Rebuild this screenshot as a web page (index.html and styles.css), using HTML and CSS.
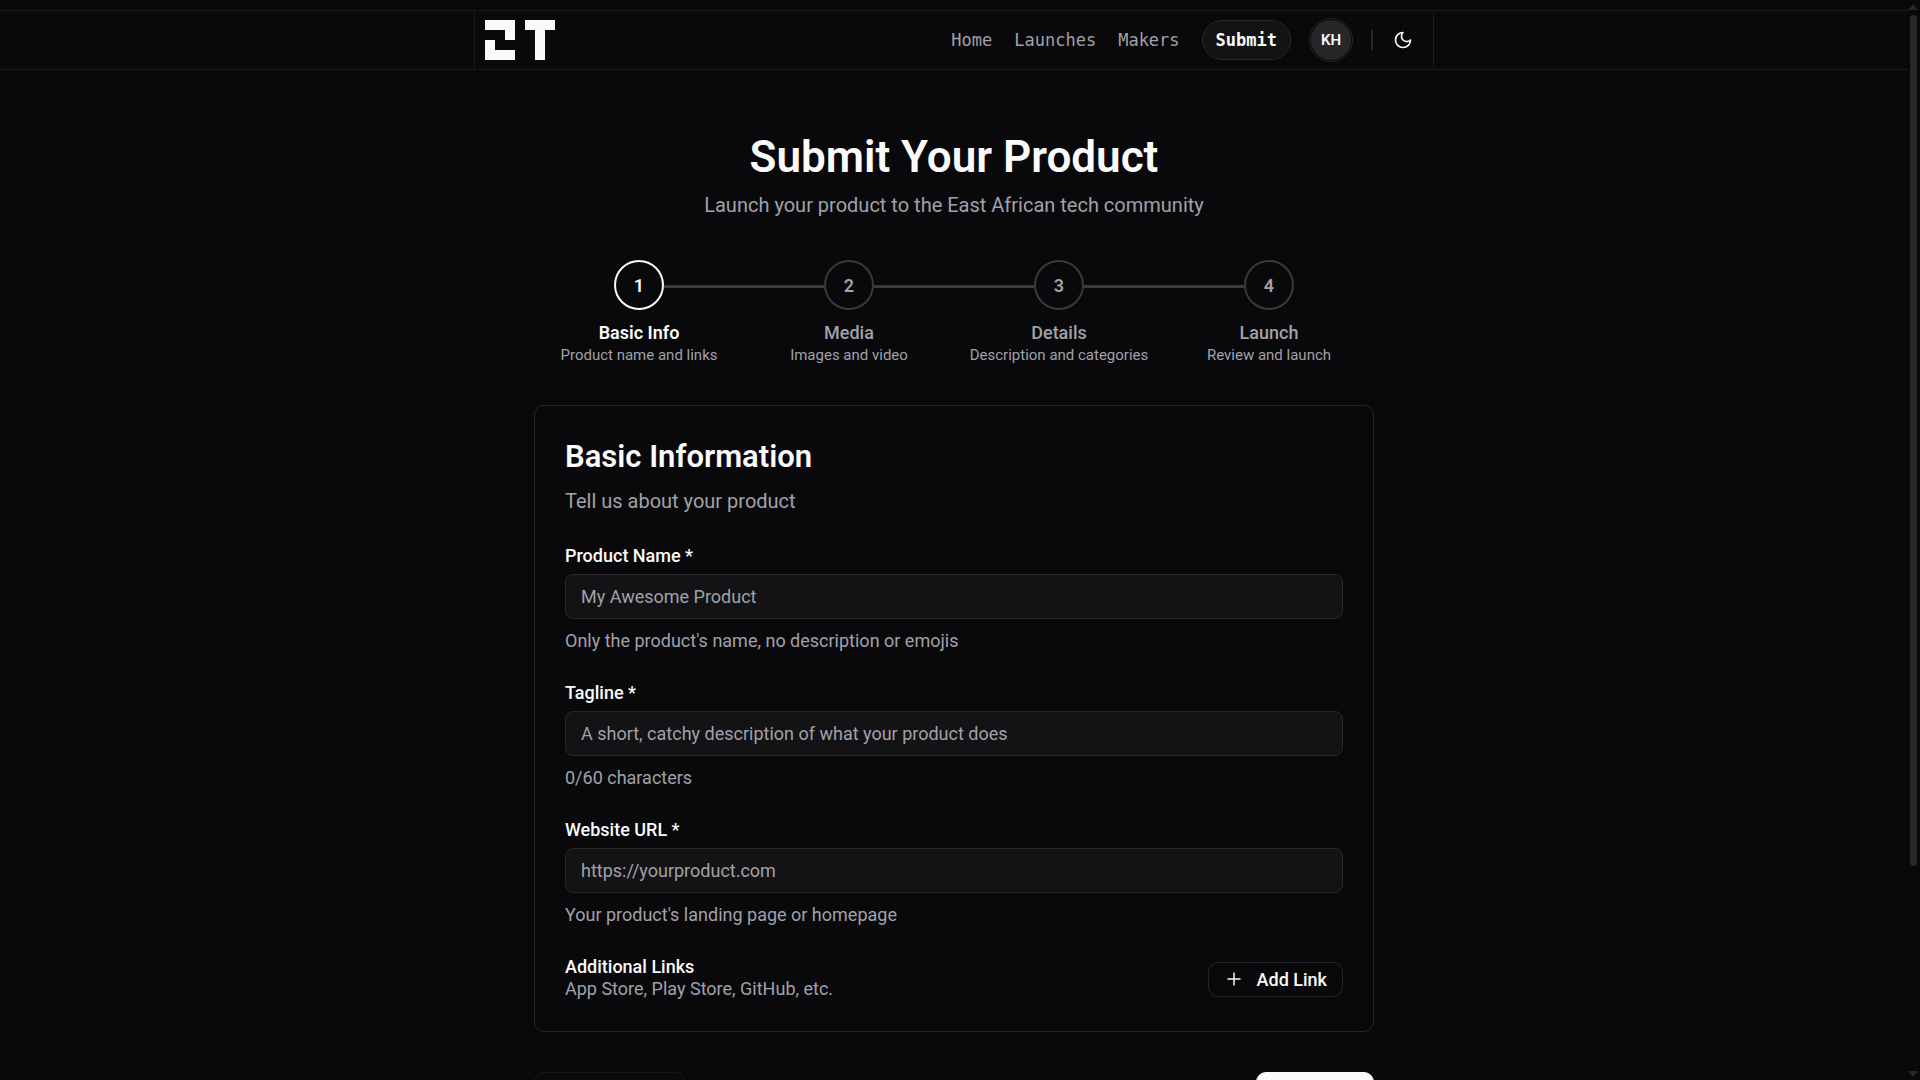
FILE: index.html
```html
<!DOCTYPE html>
<html lang="en">
<head>
<meta charset="utf-8">
<meta name="viewport" content="width=device-width, initial-scale=1">
<title>Submit Your Product</title>
<link rel="stylesheet" href="styles.css">
</head>
<body>
<div class="page">
  <header class="site-header">
    <div class="header-inner">
      <a class="logo" href="#" aria-label="Home page">
        <svg width="70" height="40" viewBox="0 0 70 40" fill="currentColor" shape-rendering="crispEdges" aria-hidden="true">
          <path d="M0 0h30v20H20V10H0zM0 20h10v10h20v10H0zM40 0h30v10H60v30H50V10H40z"/>
        </svg>
      </a>
      <nav class="nav">
        <a class="nav-link" href="#">Home</a>
        <a class="nav-link" href="#">Launches</a>
        <a class="nav-link" href="#">Makers</a>
        <a class="nav-link nav-submit" href="#">Submit</a>
      </nav>
      <button class="avatar" type="button"><span class="avatar-initials">KH</span></button>
      <span class="divider"></span>
      <button class="theme-toggle" type="button" aria-label="Toggle theme">
        <svg width="20" height="20" viewBox="0 0 24 24" fill="none" stroke="currentColor" stroke-width="2" stroke-linecap="round" stroke-linejoin="round" aria-hidden="true"><path d="M12 3a6 6 0 0 0 9 9 9 9 0 1 1-9-9Z"/></svg>
      </button>
    </div>
  </header>

  <main class="content">
    <div class="intro">
      <h1 class="title">Submit Your Product</h1>
      <p class="lead">Launch your product to the East African tech community</p>
    </div>

    <ol class="steps">
      <li class="step step-active">
        <span class="step-number">1</span>
        <span class="step-name">Basic Info</span>
        <span class="step-text">Product name and links</span>
      </li>
      <li class="step">
        <span class="step-number">2</span>
        <span class="step-name">Media</span>
        <span class="step-text">Images and video</span>
      </li>
      <li class="step">
        <span class="step-number">3</span>
        <span class="step-name">Details</span>
        <span class="step-text">Description and categories</span>
      </li>
      <li class="step">
        <span class="step-number">4</span>
        <span class="step-name">Launch</span>
        <span class="step-text">Review and launch</span>
      </li>
    </ol>

    <form class="form">
      <section class="card">
        <div class="card-head">
          <h2 class="card-title">Basic Information</h2>
          <p class="lead">Tell us about your product</p>
        </div>
        <div class="field">
          <label class="label" for="name">Product Name *</label>
          <input class="input" id="name" type="text" placeholder="My Awesome Product">
          <p class="hint">Only the product's name, no description or emojis</p>
        </div>
        <div class="field">
          <label class="label" for="tagline">Tagline *</label>
          <input class="input" id="tagline" type="text" maxlength="60" placeholder="A short, catchy description of what your product does">
          <p class="hint">0/60 characters</p>
        </div>
        <div class="field">
          <label class="label" for="url">Website URL *</label>
          <input class="input" id="url" type="url" placeholder="https://yourproduct.com">
          <p class="hint">Your product's landing page or homepage</p>
        </div>
        <div class="links-row">
          <div>
            <h3 class="label">Additional Links</h3>
            <p class="hint">App Store, Play Store, GitHub, etc.</p>
          </div>
          <button class="button button-small" type="button">
            <svg width="20" height="20" viewBox="0 0 20 20" fill="none" stroke="currentColor" stroke-width="1.5" stroke-linecap="round" aria-hidden="true"><path d="M4 10h12M10 4v12"/></svg>
            Add Link
          </button>
        </div>
      </section>
      <div class="actions">
        <button class="button button-previous" type="button" aria-label="Previous" disabled></button>
        <button class="button button-next" type="button" aria-label="Next"></button>
      </div>
    </form>
  </main>
</div>
<div class="scrollbar" aria-hidden="true">
  <svg width="10" height="6" viewBox="0 0 10 6"><path d="M5 0l5 6H0z"/></svg>
  <span class="track"><span class="thumb"></span></span>
  <svg width="10" height="6" viewBox="0 0 10 6"><path d="M0 0h10L5 6z"/></svg>
</div>
</body>
</html>
```

FILE: styles.css
```css
:root {
  --bg: #09090b;
  --fg: #fafafa;
  --muted: #a1a1aa;
  --border: #27272a;
  --border-soft: #1b1b1e;
  --surface: #131315;
  --line: #3a3a3c;
}

* {
  box-sizing: border-box;
}

body {
  display: flex;
  height: 100vh;
  margin: 0;
  background: var(--bg);
  color: var(--fg);
  font: 400 18px/25px Roboto, "Liberation Sans", sans-serif;
}

h1, h2, h3, p, ol {
  margin: 0;
  padding: 0;
}

a {
  color: inherit;
  text-decoration: none;
}

button, input {
  font: inherit;
  color: inherit;
}

svg {
  display: block;
}

.page {
  flex: 1;
  overflow-y: auto;
  scrollbar-width: none;
}

/* Header */
.site-header {
  margin-top: 10px;
  border-top: 1px solid var(--border-soft);
  border-bottom: 1px solid var(--border-soft);
}

.header-inner {
  display: flex;
  align-items: center;
  max-width: 960px;
  height: 58px;
  margin: 0 auto;
  padding: 0 10px;
  border-left: 1px solid var(--border-soft);
  border-right: 1px solid var(--border-soft);
}

.logo {
  margin-right: auto;
}

.nav {
  display: flex;
  align-items: center;
  gap: 22px;
  color: var(--muted);
  font: 400 17px/24px "DejaVu Sans Mono", "Liberation Mono", monospace;
}

.nav-submit {
  padding: 7px 13px;
  border: 1px solid var(--border);
  border-radius: 20px;
  background: var(--surface);
  color: var(--fg);
  font-weight: 700;
}

.avatar {
  width: 44px;
  height: 44px;
  margin: 0 18px;
  padding: 1px;
  border: 1px solid var(--border);
  border-radius: 50%;
  background: none;
}

.avatar-initials {
  display: block;
  border-radius: 50%;
  background: var(--border);
  font-size: 15px;
  font-weight: 600;
  line-height: 40px;
}

.divider {
  width: 2px;
  height: 20px;
  background: var(--border);
}

.theme-toggle {
  display: grid;
  place-items: center;
  width: 40px;
  height: 40px;
  margin-left: 10px;
  padding: 0;
  border: 0;
  background: none;
}

/* Intro */
.content {
  max-width: 840px;
  margin: 0 auto;
  padding: 60px 0;
}

.intro {
  text-align: center;
}

.title {
  margin-bottom: 6px;
  font-size: 44px;
  font-weight: 600;
  line-height: 54px;
}

.lead {
  color: var(--muted);
  font-size: 20px;
  line-height: 30px;
}

/* Steps */
.steps {
  display: grid;
  grid-template-columns: repeat(4, 1fr);
  margin: 40px 0;
  list-style: none;
}

.step {
  display: grid;
  grid-template-columns: 1fr 50px 1fr;
  align-items: center;
  color: var(--muted);
  text-align: center;
}

.step::before,
.step::after {
  content: "";
  height: 3px;
  margin-bottom: 7px;
  background: var(--line);
}

.step:first-child::before,
.step:last-child::after {
  background: none;
}

.step-number {
  height: 50px;
  margin-bottom: 10px;
  border: 2px solid var(--line);
  border-radius: 50%;
  font-weight: 600;
  line-height: 47px;
}

.step::after {
  grid-row: 1;
  grid-column: 3;
}

.step-name,
.step-text {
  grid-column: 1 / -1;
}

.step-name {
  font-weight: 500;
}

.step-text {
  font-size: 15px;
  line-height: 20px;
}

.step-active .step-number {
  border-color: var(--fg);
  color: var(--fg);
}

.step-active .step-name {
  color: var(--fg);
  font-weight: 600;
}

/* Form */
.card {
  display: grid;
  gap: 30px;
  padding: 30px;
  border: 1px solid var(--border);
  border-radius: 10px;
}

.card-title {
  margin-bottom: 9px;
  font-size: 31px;
  font-weight: 600;
  line-height: 41px;
}

.field {
  display: grid;
  gap: 9px;
}

.label {
  font-size: 18px;
  font-weight: 500;
  line-height: 19px;
}

.input {
  width: 100%;
  height: 45px;
  padding: 0 15px;
  border: 1px solid var(--border);
  border-radius: 8px;
  background: var(--surface);
}

.input::placeholder {
  color: var(--muted);
  opacity: 1;
}

.hint {
  color: var(--muted);
}

.links-row {
  display: flex;
  align-items: center;
  justify-content: space-between;
}

.button {
  display: flex;
  align-items: center;
  justify-content: center;
  height: 45px;
  border: 1px solid var(--border);
  border-radius: 10px;
  background: none;
  font-weight: 500;
}

.button-small {
  gap: 13px;
  height: 35px;
  padding: 0 15px;
}

.actions {
  display: flex;
  justify-content: space-between;
  margin-top: 40px;
}

.button-previous {
  width: 151px;
  opacity: 0.5;
}

.button-next {
  width: 118px;
  border-color: var(--fg);
  background: var(--fg);
  color: var(--bg);
}

/* Scrollbar */
.scrollbar {
  display: flex;
  flex-direction: column;
  align-items: center;
  gap: 5px;
  width: 12px;
  padding: 4px 2px 3px 0;
  fill: var(--border);
}

.track {
  flex: 1;
}

.thumb {
  display: block;
  width: 7px;
  height: 81%;
  border-radius: 4px;
  background: var(--border);
}
```
